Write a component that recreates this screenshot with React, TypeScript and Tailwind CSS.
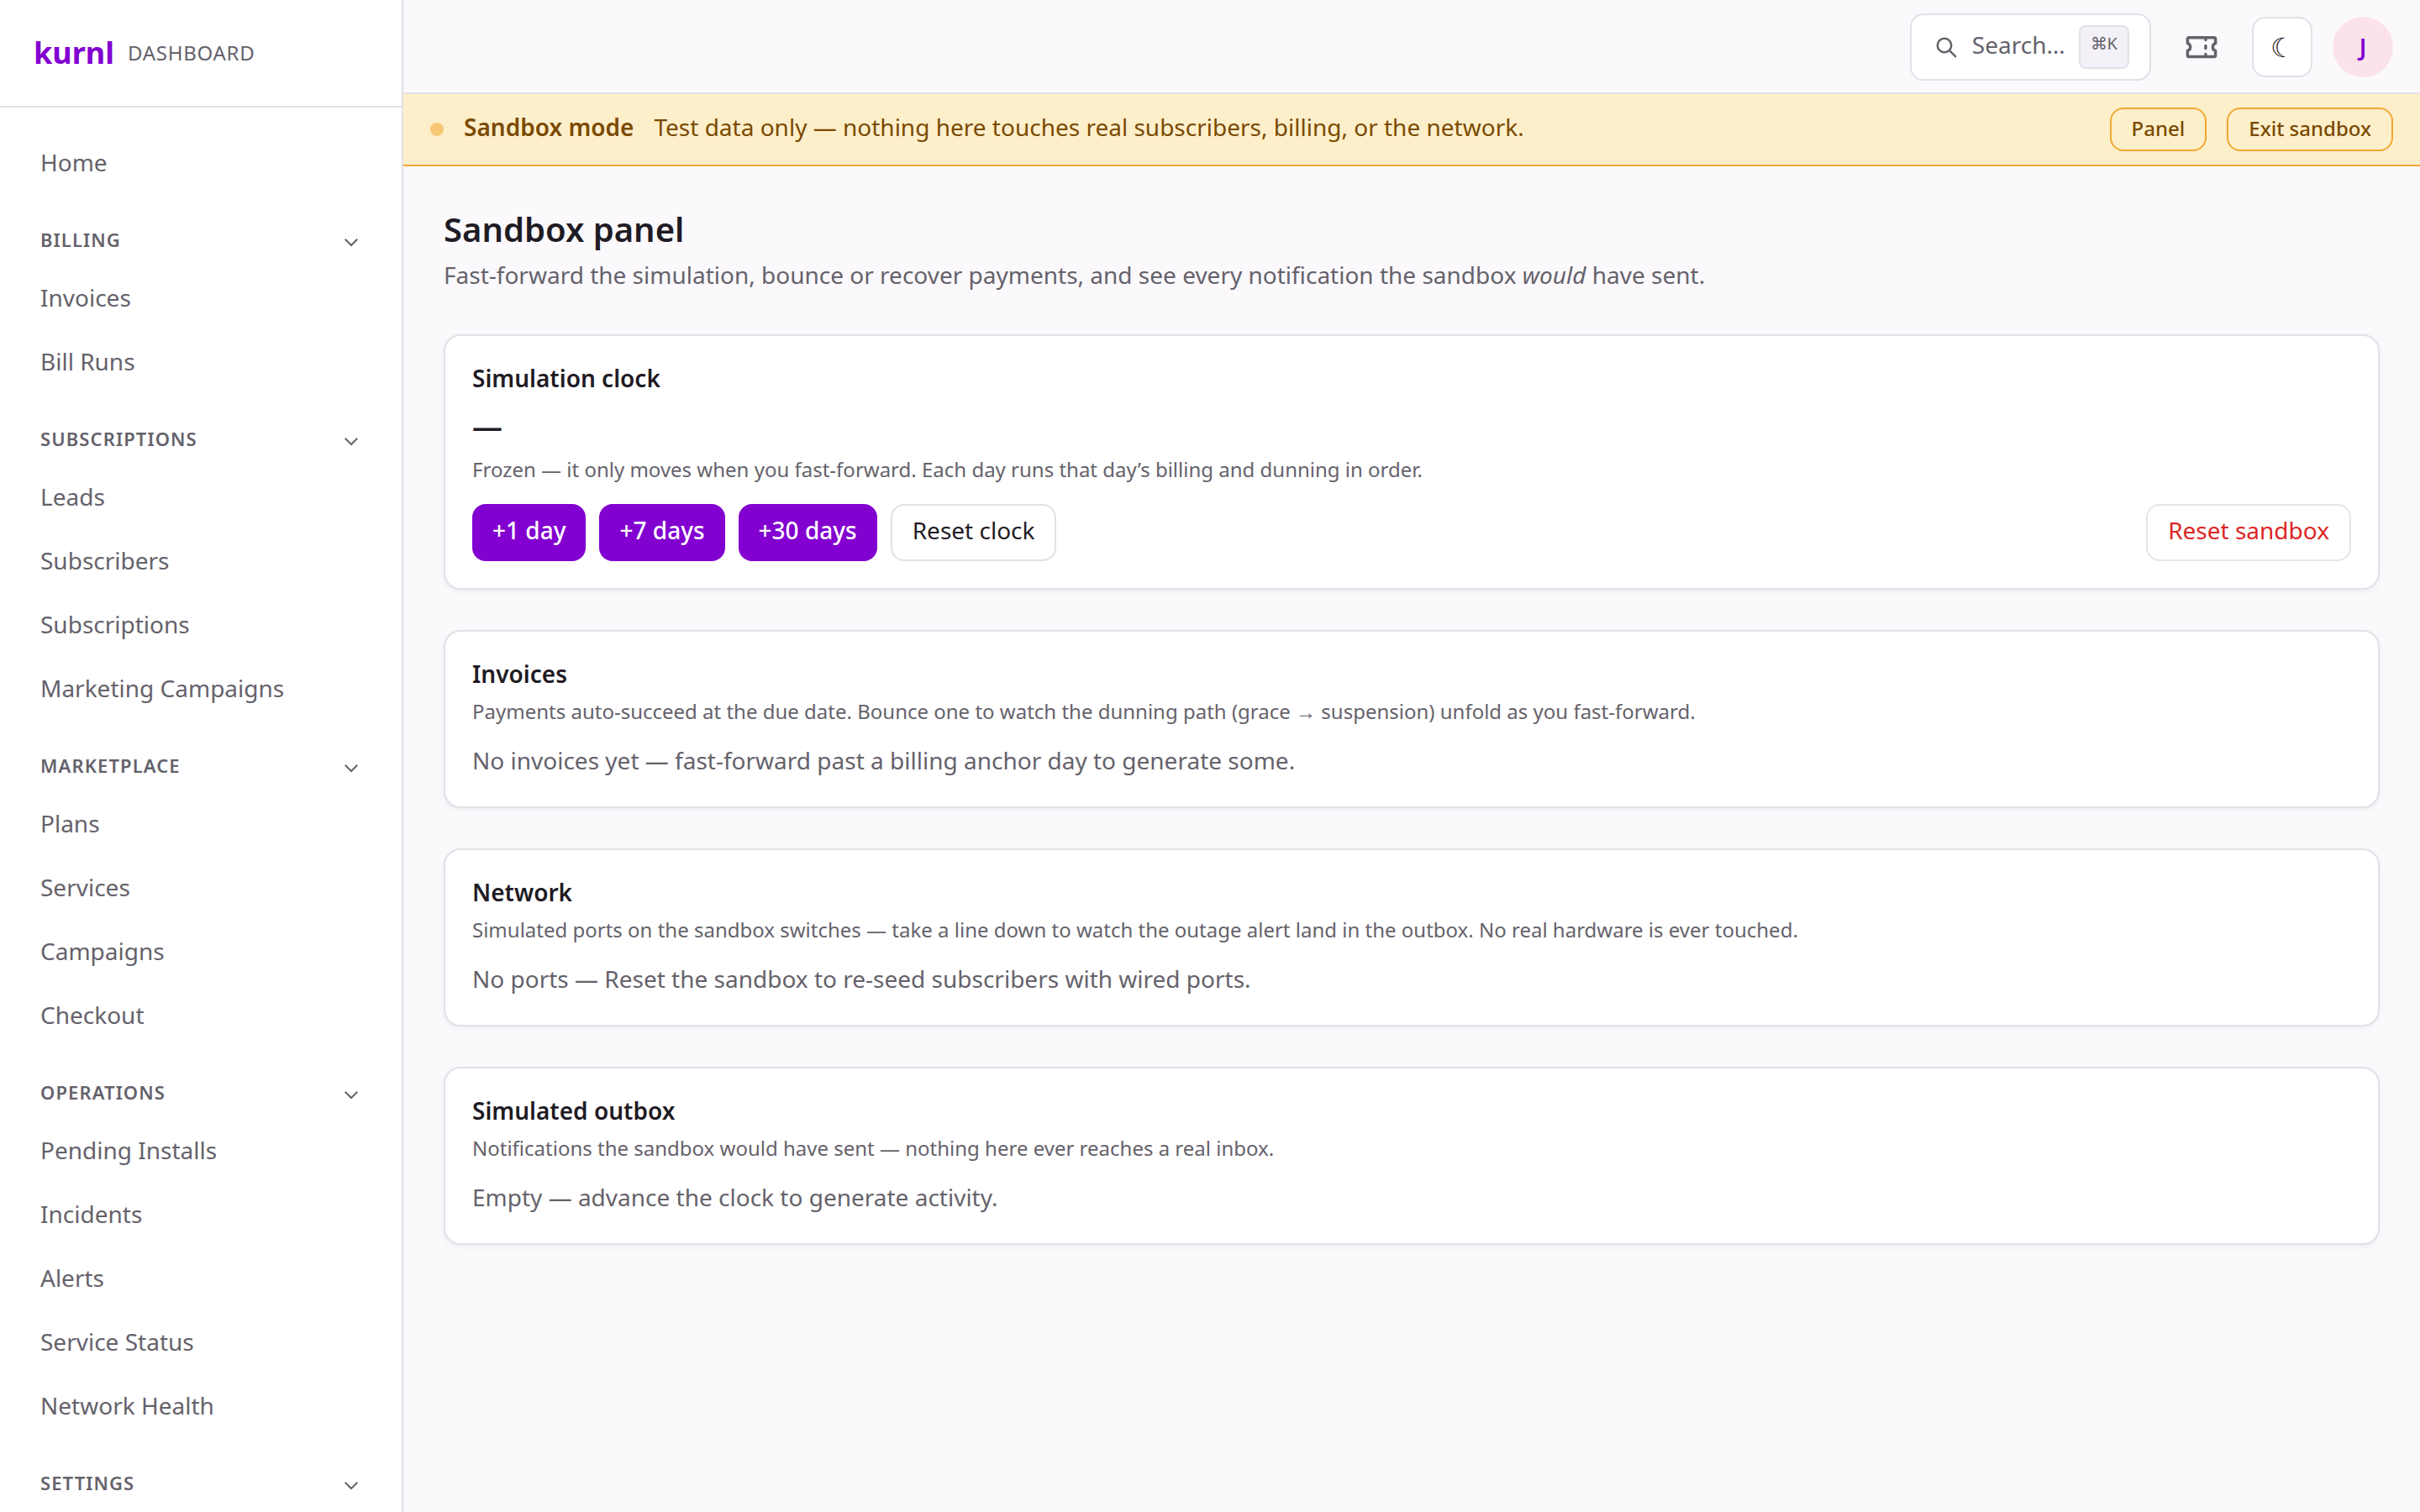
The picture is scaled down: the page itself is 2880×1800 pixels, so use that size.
import React from "react";

const sections = [
  { label: "Billing", items: ["Invoices", "Bill Runs"] },
  { label: "Subscriptions", items: ["Leads", "Subscribers", "Subscriptions", "Marketing Campaigns"] },
  { label: "Marketplace", items: ["Plans", "Services", "Campaigns", "Checkout"] },
  { label: "Operations", items: ["Pending Installs", "Incidents", "Alerts", "Service Status", "Network Health"] },
  { label: "Settings", items: [] },
];

const cards = [
  {
    title: "Invoices",
    description:
      "Payments auto-succeed at the due date. Bounce one to watch the dunning path (grace → suspension) unfold as you fast-forward.",
    empty: "No invoices yet — fast-forward past a billing anchor day to generate some.",
  },
  {
    title: "Network",
    description:
      "Simulated ports on the sandbox switches — take a line down to watch the outage alert land in the outbox. No real hardware is ever touched.",
    empty: "No ports — Reset the sandbox to re-seed subscribers with wired ports.",
  },
  {
    title: "Simulated outbox",
    description: "Notifications the sandbox would have sent — nothing here ever reaches a real inbox.",
    empty: "Empty — advance the clock to generate activity.",
  },
];

function Chevron() {
  return (
    <svg viewBox="0 0 24 24" className="size-6" fill="none" stroke="currentColor" strokeWidth="2" aria-hidden="true">
      <path d="M4.7 10.7l7.3 7.3 7.3-7.3" />
    </svg>
  );
}

function NavLink({ label }: { label: string }) {
  return (
    <a href="#" className="mb-0.5 block rounded-2xl px-6 py-4 leading-[42px]">
      {label}
    </a>
  );
}

function Sidebar() {
  return (
    <aside className="w-[480px] shrink-0 overflow-hidden border-r-2 border-[#e2e0e8] bg-white text-[#65626b]">
      <div className="flex h-32 items-center gap-4 border-b-2 border-[#e2e0e8] px-10">
        <span className="text-4xl font-bold text-[#8200d0]">kurnl</span>
        <span className="text-2xl tracking-[0.03em]">DASHBOARD</span>
      </div>
      <nav className="px-6 py-7">
        <NavLink label="Home" />
        {sections.map((s) => (
          <section key={s.label} className="pt-6">
            <button
              type="button"
              className="flex w-full items-center justify-between px-6 pt-3 pb-3.5 text-[22px] leading-[35px] font-semibold tracking-wider uppercase"
            >
              {s.label}
              <Chevron />
            </button>
            {s.items.map((i) => (
              <NavLink key={i} label={i} />
            ))}
          </section>
        ))}
      </nav>
    </aside>
  );
}

function TopBar() {
  return (
    <header className="flex h-28 items-center justify-end gap-6 border-b-2 border-[#e2e0e8] px-8 pt-0.5">
      <button
        type="button"
        className="flex h-20 items-center gap-4 rounded-2xl border-2 border-[#e2e0e8] bg-white pr-6 pl-7 text-[#65626b]"
      >
        <svg viewBox="0 0 28 28" className="size-7" fill="none" stroke="currentColor" strokeWidth="2.5" aria-hidden="true">
          <circle cx="11" cy="12" r="8.2" />
          <path d="M16.8 17.8l8 8" />
        </svg>
        <span className="pb-1.5">Search…</span>
        <kbd className="flex h-[52px] items-start rounded-lg border-2 border-[#e2e0e8] bg-[#f3f1f7] px-3 font-['Noto_Sans',sans-serif] text-xl leading-10">
          ⌘K
        </kbd>
      </button>
      <button type="button" aria-label="Tickets" className="flex size-[72px] items-center justify-center text-[#65626b]">
        <svg viewBox="0 0 24 24" className="size-[42px]" fill="none" stroke="currentColor" strokeWidth="2" strokeLinecap="round" strokeLinejoin="round" aria-hidden="true">
          <path d="M2.5 9.5V6.5a1 1 0 0 1 1-1h17a1 1 0 0 1 1 1v3a2.6 2.6 0 0 0 0 5v3a1 1 0 0 1-1 1h-17a1 1 0 0 1-1-1v-3a2.6 2.6 0 0 0 0-5z" />
          <path d="M14.8 6v1.2M14.8 11.2v1.6M14.8 16.8v1.2" />
        </svg>
      </button>
      <button
        type="button"
        aria-label="Toggle theme"
        className="flex size-[72px] items-center justify-center rounded-2xl border-2 border-[#e2e0e8] bg-white text-[32px]"
      >
        ☾
      </button>
      <button
        type="button"
        aria-label="Account"
        className="flex size-[72px] items-center justify-center rounded-full bg-[#fce3ea] font-semibold text-[#8200d0]"
      >
        J
      </button>
    </header>
  );
}

function Banner() {
  return (
    <div className="flex items-center gap-6 border-b-2 border-[#f0a830] bg-[#feefcb] px-8 py-4 text-[#7a4a00]">
      <span className="size-4 rounded-full bg-[#f7c774]" />
      <strong className="pb-1.5 font-semibold">Sandbox mode</strong>
      <span className="pb-1.5">Test data only — nothing here touches real subscribers, billing, or the network.</span>
      <div className="ml-auto flex gap-6 text-2xl font-medium">
        <button type="button" className="h-[52px] rounded-2xl border-2 border-[#f0a830] px-6 pb-0.5">
          Panel
        </button>
        <button type="button" className="h-[52px] rounded-2xl border-2 border-[#f0a830] px-6 pb-0.5">
          Exit sandbox
        </button>
      </div>
    </div>
  );
}

const cardClass = "mt-12 rounded-[20px] border-2 border-[#e2e0e8] bg-white px-8 pt-8 shadow-[0_2px_6px_rgba(30,20,50,0.06)]";

function ClockCard() {
  return (
    <section className={`${cardClass} pb-8`}>
      <h2 className="leading-9 font-semibold">Simulation clock</h2>
      <p className="mt-2.5 text-4xl leading-[60px] font-semibold">—</p>
      <p className="mt-0.5 text-2xl leading-[38px] text-[#65626b]">
        Frozen — it only moves when you fast-forward. Each day runs that day’s billing and dunning in order.
      </p>
      <div className="mt-[22px] flex gap-4">
        {["+1 day", "+7 days", "+30 days"].map((t) => (
          <button key={t} type="button" className="h-[68px] rounded-2xl bg-[#8200d0] px-6 pb-1.5 font-medium text-white">
            {t}
          </button>
        ))}
        <button type="button" className="h-[68px] rounded-2xl border-2 border-[#e2e0e8] px-6 pb-1.5">
          Reset clock
        </button>
        <button type="button" className="ml-auto h-[68px] rounded-2xl border-2 border-[#e7e5ec] px-6 pb-1.5 text-[#dc2626]">
          Reset sandbox
        </button>
      </div>
    </section>
  );
}

export default function App() {
  return (
    <div className="flex h-screen overflow-hidden bg-[#fbf9fc] font-['Noto_Sans','Liberation_Sans',sans-serif] text-[28px] leading-[42px] text-[#1f1b24]">
      <Sidebar />
      <div className="flex min-w-0 flex-1 flex-col">
        <TopBar />
        <Banner />
        <main className="flex-1 overflow-hidden p-12">
          <h1 className="text-[40px] leading-[54px] font-semibold">Sandbox panel</h1>
          <p className="mt-1 leading-[46px] text-[#65626b]">
            Fast-forward the simulation, bounce or recover payments, and see every notification the sandbox <em>would</em> have sent.
          </p>
          <ClockCard />
          {cards.map((c) => (
            <section key={c.title} className={`${cardClass} pb-[34px]`}>
              <h2 className="leading-9 font-semibold">{c.title}</h2>
              <p className="mt-2 text-2xl leading-[38px] text-[#65626b]">{c.description}</p>
              <p className="mt-[18px] text-[#65626b]">{c.empty}</p>
            </section>
          ))}
        </main>
      </div>
    </div>
  );
}
